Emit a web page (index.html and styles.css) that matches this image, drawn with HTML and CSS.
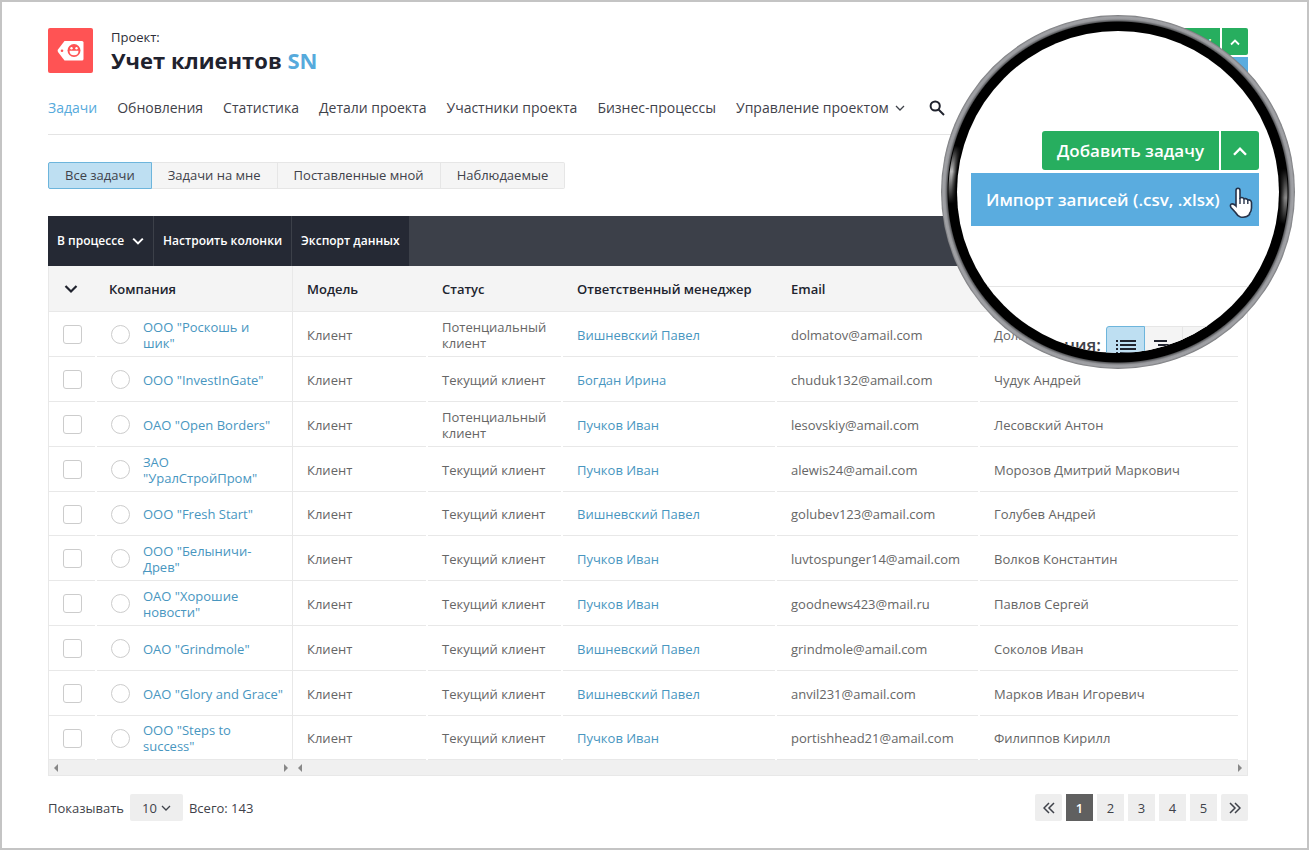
FILE: index.html
```html
<!DOCTYPE html>
<html lang="ru">
<head>
<meta charset="utf-8">
<title>Учет клиентов SN</title>
<link rel="stylesheet" href="styles.css">
</head>
<body>
<div class="page">
  <header class="header">
    <svg class="logo" viewBox="0 0 45 45" aria-hidden="true">
      <rect width="45" height="45" rx="2" fill="#ff5354"/>
      <path d="M16.500 13H34q1.500 0 1.500 1.500V31q0 1.500-1.500 1.500H16.500L10 24q-.8-1.200 0-2.400z" fill="#fff"/>
      <circle cx="14" cy="22.800" r="1.300" fill="#ff5354"/>
      <circle cx="26" cy="22.500" r="6.500" fill="#ff5354"/>
      <circle cx="23.500" cy="20.200" r="1.200" fill="#fff"/><circle cx="28.500" cy="20.200" r="1.200" fill="#fff"/>
      <path d="M21.500 22.800h9q0 4.500-4.500 4.500t-4.500-4.500z" fill="#fff"/>
    </svg>
    <div class="heading">
      <span class="kind">Проект:</span>
      <h1 class="title">Учет клиентов <span class="accent">SN</span></h1>
    </div>
    <div class="actions">
      <button class="add" type="button">Добавить задачу</button>
      <button class="toggle" type="button" aria-label="Свернуть"><svg class="i-up" viewBox="0 0 12 8"><path d="M2 6.500 6 2.500l4 4"/></svg></button>
      <button class="import" type="button" aria-label="Импорт записей"></button>
    </div>
  </header>

  <nav class="nav">
    <a class="current" href="#">Задачи</a>
    <a href="#">Обновления</a>
    <a href="#">Статистика</a>
    <a href="#">Детали проекта</a>
    <a href="#">Участники проекта</a>
    <a href="#">Бизнес-процессы</a>
    <a href="#">Управление проектом <svg class="i-down" viewBox="0 0 10 8"><path d="M1 2l4 4 4-4"/></svg></a>
    <button class="search" type="button" aria-label="Поиск"><svg viewBox="0 0 16 16"><circle cx="6.200" cy="6" r="4.600"/><path d="M9.500 9.500 15 15"/></svg></button>
  </nav>

  <div class="filters">
    <button class="filter on" type="button">Все задачи</button>
    <button class="filter" type="button">Задачи на мне</button>
    <button class="filter" type="button">Поставленные мной</button>
    <button class="filter" type="button">Наблюдаемые</button>
  </div>

  <div class="toolbar">
    <button class="tool" type="button">В процессе <svg class="i-down bold" viewBox="0 0 10 8"><path d="M1 2l4 4 4-4"/></svg></button>
    <button class="tool" type="button">Настроить колонки</button>
    <button class="tool" type="button">Экспорт данных</button>
  </div>

  <div class="grid">
    <table class="table">
      <colgroup><col class="c-check"><col class="c-dot"><col class="c-company"><col class="c-model"><col class="c-status"><col class="c-manager"><col class="c-email"><col></colgroup>
      <thead>
        <tr><th class="pick"><svg class="i-head" viewBox="0 0 14 10"><path d="M1.500 2 7 7.500 12.500 2"/></svg></th><th class="company-head" colspan="2">Компания</th><th>Модель</th><th>Статус</th><th>Ответственный менеджер</th><th>Email</th><th></th></tr>
      </thead>
      <tbody id="rows"></tbody>
    </table>
    <div class="scrolls"><div class="scroll left"><i class="prev"></i><i class="next"></i></div><div class="scroll right"><i class="prev"></i><i class="next"></i></div></div>
  </div>

  <footer class="footer">
    <label for="size">Показывать</label>
    <span class="size"><select id="size"><option>10</option></select><svg class="i-down" viewBox="0 0 10 8"><path d="M1 2l4 4 4-4"/></svg></span>
    <span>Всего: 143</span>
    <nav class="pager" aria-label="Страницы">
      <a href="#" aria-label="Назад"><svg viewBox="0 0 12 12"><path d="M6 1 1 6l5 5M11 1 6 6l5 5"/></svg></a>
      <a class="on" href="#">1</a><a href="#">2</a><a href="#">3</a><a href="#">4</a><a href="#">5</a>
      <a href="#" aria-label="Вперёд"><svg viewBox="0 0 12 12"><path d="M1 1l5 5-5 5M6 1l5 5-5 5"/></svg></a>
    </nav>
  </footer>

  <div class="lens">
    <div class="glass">
      <div class="zoom-actions">
        <button class="zoom-add" type="button">Добавить задачу</button>
        <button class="zoom-toggle" type="button" aria-label="Свернуть"><svg class="i-up" viewBox="0 0 12 8"><path d="M2 6.500 6 2.500l4 4"/></svg></button>
      </div>
      <button class="zoom-import" type="button">Импорт записей (.csv, .xlsx)</button>
      <div class="zoom-line"></div>
      <div class="zoom-views">
        <span class="zoom-label">ния:</span>
        <button class="view on" type="button" aria-label="Список"><svg viewBox="0 0 20 16"><path d="M0 2h2M4 2h16M0 6h2M4 6h16M0 10h2M4 10h16M0 14h2M4 14h16"/></svg></button>
        <button class="view" type="button" aria-label="Диаграмма"><svg viewBox="0 0 20 16"><path d="M0 2h13M4 6h12M8 10h12M2 14h12"/></svg></button>
        <button class="view" type="button" aria-label="Календарь"></button>
        <button class="view" type="button" aria-label="Доска"></button>
      </div>
      <svg class="hand" viewBox="0 0 24 32"><path d="M7 19V3.500Q7 1.200 9 1.200t2 2.300V11q2.600-1.200 4 .8 2.800-.8 3.800 1.200 3.400-.6 3.700 2.600V21q0 3-2 5.500v1q-3 3.500-9 2.500-3-1-5-4.500L2 20.500Q.6 18 2.500 17q2-.6 4.500 2z" fill="#fff" stroke="#26334a" stroke-width="1.600"/><path d="M11 11v6M15 12v5M18.800 13v4" fill="none" stroke="#26334a" stroke-width="1.400"/></svg>
    </div>
  </div>
</div>
<script src="rows.js"></script>
</body>
</html>
```
FILE: rows.js
```js
const P = 'Потенциальный клиент', T = 'Текущий клиент';
const V = 'Вишневский Павел', I = 'Пучков Иван';
const clients = [
  ['ООО "Роскошь и\nшик"', P, V, 'dolmatov@amail.com', 'Долматов'],
  ['ООО "InvestInGate"', T, 'Богдан Ирина', 'chuduk132@amail.com', 'Чудук Андрей'],
  ['ОАО "Open Borders"', P, I, 'lesovskiy@amail.com', 'Лесовский Антон'],
  ['ЗАО\n"УралСтройПром"', T, I, 'alewis24@amail.com', 'Морозов Дмитрий Маркович'],
  ['ООО "Fresh Start"', T, V, 'golubev123@amail.com', 'Голубев Андрей'],
  ['ООО "Белыничи-\nДрев"', T, I, 'luvtospunger14@amail.com', 'Волков Константин'],
  ['ОАО "Хорошие\nновости"', T, I, 'goodnews423@mail.ru', 'Павлов Сергей'],
  ['ОАО "Grindmole"', T, V, 'grindmole@amail.com', 'Соколов Иван'],
  ['ОАО "Glory and Grace"', T, V, 'anvil231@amail.com', 'Марков Иван Игоревич'],
  ['ООО "Steps to\nsuccess"', T, I, 'portishhead21@amail.com', 'Филиппов Кирилл']
];
document.getElementById('rows').innerHTML = clients.map(([name, status, manager, email, person], n) => `
  <tr>
    <td class="pick"><input class="check" type="checkbox" id="c${n}" aria-label='${name}'></td>
    <td class="dot"><input class="round" type="radio" name="done${n}" aria-label='Завершить ${name}'></td>
    <td class="company"><a href="#">${name}</a></td>
    <td>Клиент</td><td>${status}</td><td><a href="#">${manager}</a></td><td>${email}</td><td>${person}</td>
  </tr>`).join('');
```
FILE: styles.css
```css
* { box-sizing: border-box; }
body { margin: 0; background: #fff; color: #3f424a; font-family: "Open Sans", "Noto Sans", sans-serif; font-size: 13px; }
button, select { font: inherit; color: inherit; border: 0; margin: 0; padding: 0; background: none; cursor: pointer; }
a { color: inherit; text-decoration: none; }
svg { display: block; fill: none; stroke: currentColor; }
.page { position: relative; min-height: 100vh; border: 2px solid #c4c4c4; padding: 26px 59px 24px 46px; overflow: hidden; }

.header { display: flex; gap: 18px; height: 45px; }
.logo { width: 45px; height: 45px; stroke: none; }
.heading { flex: 1; }
.kind { display: block; font-size: 13px; line-height: 18px; color: #2c2e38; }
.title { margin: 0; font-size: 22px; line-height: 28px; font-weight: 700; color: #1f222e; }
.accent { color: #56aadc; }
.actions { position: relative; display: flex; gap: 2px; height: 27px; color: #fff; font-size: 12px; font-weight: 600; }
.add { padding: 0 9px; border-radius: 2px 0 0 2px; background: #27ae5f; }
.toggle { width: 26px; display: grid; place-items: center; border-radius: 0 2px 2px 0; background: #27ae5f; }
.import { position: absolute; top: 29px; right: 0; width: 198px; height: 36px; background: #5aacdf; }
.i-up { width: 12px; height: 8px; stroke-width: 1.800; }

.nav { display: flex; align-items: center; gap: 20px; height: 62px; padding-top: 8px; border-bottom: 1px solid #e4e4e4; font-size: 14px; }
.nav a { display: flex; align-items: center; gap: 6px; white-space: nowrap; }
.nav .current { color: #56aadc; }
.search { margin-left: 4px; color: #20232e; }
.search svg { width: 16px; height: 16px; stroke-width: 2; }
.i-down { width: 10px; height: 8px; stroke-width: 1.300; }
.i-down.bold { width: 12px; height: 10px; stroke-width: 1.700; }

.filters { display: flex; height: 27px; margin-top: 27px; }
.filter { padding: 0 16px 2px; border: 1px solid #e6e6e6; border-left: 0; background: #f5f5f5; }
.filter:last-child { border-radius: 0 2px 2px 0; }
.filter.on { border: 1px solid #6db5dc; border-radius: 2px 0 0 2px; background: #bedff2; }

.toolbar { display: flex; height: 50px; margin-top: 27px; background: #3c4049; font-size: 12px; }
.tool { display: flex; align-items: center; gap: 8px; padding: 0 9px 1px; background: #252934; border-right: 1px solid #3c4049; color: #fff; font-weight: 600; }

.grid { border: 1px solid #e8e8e8; border-top: 0; }
.table { width: 100%; table-layout: fixed; border-spacing: 0; line-height: 16px; color: #666; }
.c-check { width: 48px; }
.c-dot { width: 46px; }
.c-company { width: 150px; }
.c-model, .c-status { width: 135px; }
.c-manager { width: 214px; }
.c-email { width: 203px; }
.table th { height: 46px; padding: 0 14px; border-bottom: 1px solid #e8e8e8; background: #f4f4f4; color: #20232e; font-weight: 600; text-align: left; }
.table td { height: 45px; padding: 0 14px; background: linear-gradient(#e8e8e8, #e8e8e8) left bottom / calc(100% - 2px) 1px no-repeat; }
.table tr:nth-child(5n) td { height: 44px; }
.table td:last-child { background-size: calc(100% - 9px) 1px; }
.table .pick, .table .dot { padding: 0 0 0 14px; }
.table .dot { background-size: 100% 1px; }
.table .company { padding: 0; border-right: 1px solid #e8e8e8; background-size: 100% 1px; white-space: pre-line; }
.table .company-head { padding: 0 12px; border-right: 1px solid #e8e8e8; }
.table a { color: #4896bf; }
.i-head { width: 14px; height: 10px; stroke-width: 2.200; margin-left: 1px; }
.check, .round { display: block; appearance: none; width: 19px; height: 19px; margin: 0; border: 1px solid #ccc; border-radius: 3px; background: #fff; }
.round { border-radius: 50%; }
.scrolls { display: flex; height: 15px; background: #f0f0f0; }
.scroll { display: flex; align-items: center; justify-content: space-between; padding: 0 5px; }
.scroll.left { width: 244px; }
.scroll.right { flex: 1; }
.prev, .next { border: 4px solid transparent; border-width: 4px 0; }
.prev { border-right: 4px solid #888; }
.next { border-left: 4px solid #888; }

.footer { display: flex; align-items: center; gap: 6px; margin-top: 18px; }
.size { display: flex; align-items: center; position: relative; height: 27px; border-radius: 2px; background: #eee; }
.size select { width: 53px; height: 27px; padding-left: 12px; appearance: none; }
.size .i-down { position: absolute; right: 12px; }
.pager { display: flex; gap: 4px; margin-left: auto; }
.pager a { display: grid; place-items: center; width: 27px; height: 27px; background: #eee; }
.pager a:first-child, .pager a:last-child { border-radius: 2px; }
.pager .on { background: #606060; color: #fff; font-weight: 600; }
.pager svg { width: 12px; height: 12px; stroke-width: 1.500; }

.lens {
  position: absolute; top: 13px; right: 12px; width: 354px; height: 354px; padding: 16px; border-radius: 50%;
  background:
    radial-gradient(closest-side, #000 162px, transparent 167px, transparent 169px, #000 170px, #5c5d60 171px, #98999d 173px, #a2a3a7 175px, #77787b 177px),
    conic-gradient(#000 82deg, #888 92deg, #000 101deg, #000 266deg, #bbb 277deg, #000 286deg);
}
.glass { position: relative; height: 100%; padding: 100px 20px 0 14px; border-radius: 50%; overflow: hidden; background: #fff; }
.zoom-actions { display: flex; justify-content: flex-end; gap: 2px; height: 39px; color: #fff; font-size: 17px; font-weight: 600; }
.zoom-add { padding: 0 15px; border-radius: 3px 0 0 3px; background: #27ae5f; }
.zoom-toggle { width: 38px; display: grid; place-items: center; border-radius: 0 3px 3px 0; background: #27ae5f; }
.zoom-toggle .i-up { width: 18px; height: 12px; stroke-width: 1.600; }
.zoom-import { display: block; width: 100%; height: 53px; margin-top: 3px; padding-left: 15px; background: #5aacdf; color: #fff; font-size: 17px; font-weight: 600; text-align: left; white-space: nowrap; }
.zoom-line { margin-top: 60px; border-top: 1px solid #e6e6e6; }
.zoom-views { display: flex; justify-content: flex-end; height: 39px; margin-top: 39px; }
.zoom-label { margin-right: 5px; font-size: 17px; font-weight: 600; line-height: 38px; white-space: nowrap; }
.view { width: 38px; padding: 12px 9px; border: 1px solid #e6e6e6; border-left: 0; background: #f4f4f4; color: #20232e; }
.view.on { width: 39px; border: 1px solid #6db5dc; border-radius: 3px 0 0 3px; background: #bedff2; }
.view svg { width: 20px; height: 16px; stroke-width: 2; }
.hand { position: absolute; right: 26px; top: 156px; width: 24px; height: 32px; }
```
